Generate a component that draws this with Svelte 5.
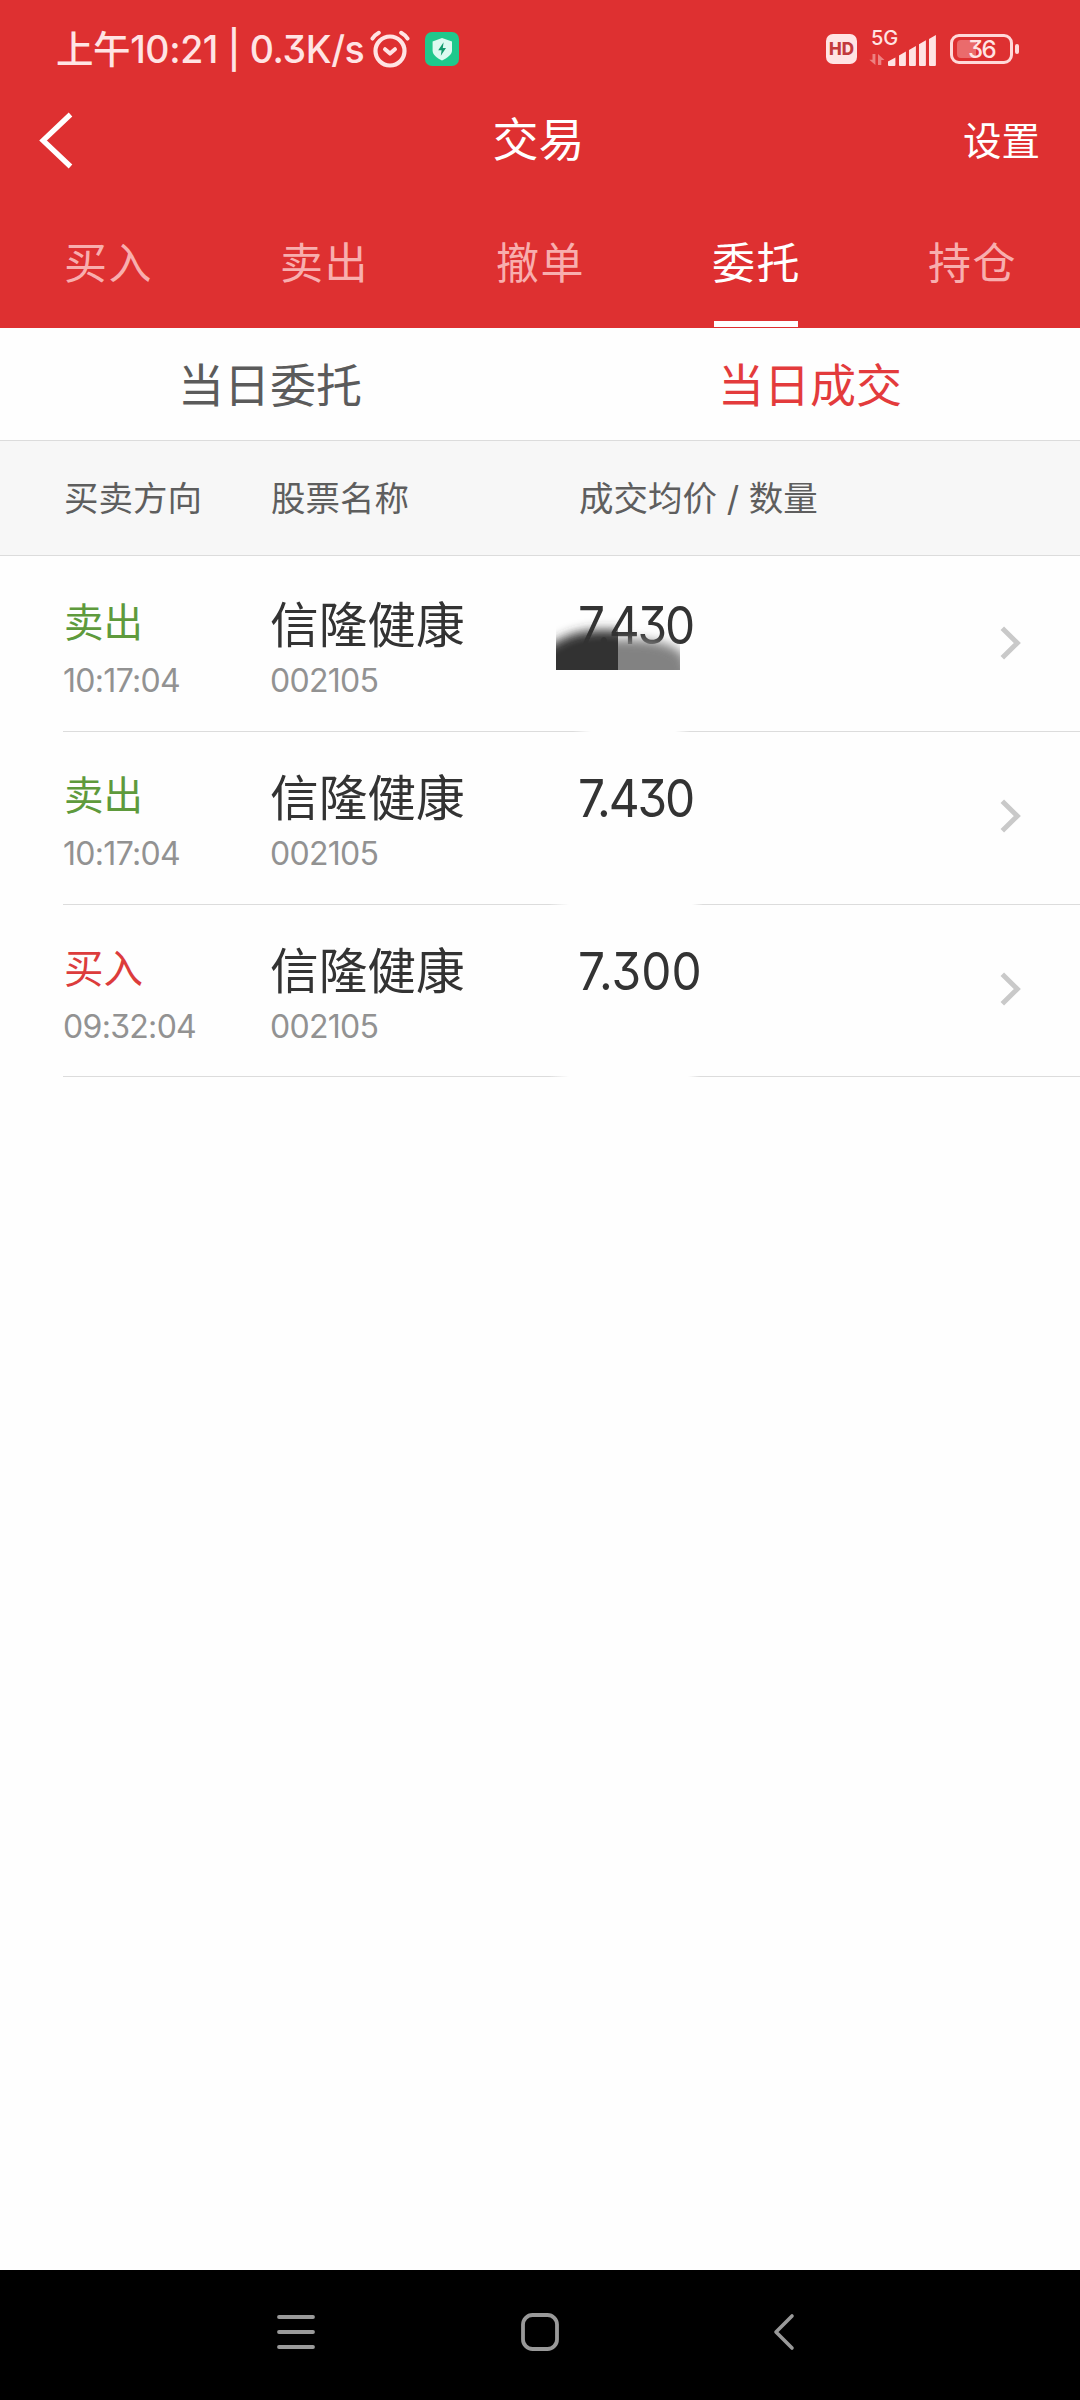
<script>
	let tabs = [
		{ label: '买入' },
		{ label: '卖出' },
		{ label: '撤单' },
		{ label: '委托', active: true },
		{ label: '持仓' }
	];

	let subTabs = [
		{ label: '当日委托' },
		{ label: '当日成交', active: true }
	];

	// gap: where the divider under the row fades out and back in
	let deals = [
		{ side: 'sell', time: '10:17:04', name: '信隆健康', code: '002105', price: '7.430', gap: [510, 528, 612, 627], smudge: true },
		{ side: 'sell', time: '10:17:04', name: '信隆健康', code: '002105', price: '7.430', gap: [486, 506, 629, 640] },
		{ side: 'buy', time: '09:32:04', name: '信隆健康', code: '002105', price: '7.300', gap: [486, 506, 625, 637] }
	];

	const sideLabel = { sell: '卖出', buy: '买入' };

	function divider(gap) {
		const [a, b, c, d] = gap;
		return `linear-gradient(to right, #dcdcdc ${a}px, transparent ${b}px, transparent ${c}px, #dcdcdc ${d}px)`;
	}
</script>

<div class="screen">
	<header class="top">
		<div class="status">
			<span class="clock">上午10:21 | 0.3K/s</span>
			<svg class="alarm" width="40" height="38" viewBox="0 0 40 38" fill="none" stroke="#ffe4e4" stroke-linecap="round" stroke-linejoin="round">
				<circle cx="20" cy="21" r="14.5" stroke-width="4.2" />
				<path d="M15 19.200l5 4.400 5-4.400" stroke-width="4" />
				<path d="M2.500 8.600Q4.500 5.200 8.800 2.800M37.500 8.600Q35.500 5.200 31.200 2.800" stroke-width="4" />
			</svg>
			<svg class="shield" width="34" height="34" viewBox="0 0 34 34">
				<rect width="34" height="34" rx="7" fill="#1fc88c" />
				<path d="M17 6l10 3.600v8.600c0 4.600-4.600 7.600-10 10.200-5.400-2.600-9.400-5.600-9.400-10.200V9.600z" fill="#dcfaf0" />
				<path d="M18.600 10.200l-5.400 8h3.400l-.8 5.600 5.200-7.800h-3.200z" fill="#12996c" />
			</svg>

			<div class="right">
				<span class="hd">HD</span>
				<div class="signal">
					<span class="net">5G</span>
					<svg width="68" height="34" viewBox="0 0 68 34" fill="#ffe4e4">
						<path d="M6.400 22v11L.3 27.800h3.200V22zM9 33V22l6.500 6h-3.200v5z" opacity=".45" />
						<path d="M19 33v-3.500l7.400-4v7.500q0 1-1 1H20q-1 0-1-1zM30 33V23.500l6.900-4v13.500q0 1-1 1H31q-1 0-1-1zM40 33V18l6.900-4v19q0 1-1 1H41q-1 0-1-1zM50 33V12.300l6.900-4V33q0 1-1 1H51q-1 0-1-1zM60 33V7l6.900-4v30q0 1-1 1H61q-1 0-1-1z" />
					</svg>
				</div>
				<div class="battery">
					<div class="level"></div>
					<span class="percent">36</span>
				</div>
				<div class="nub"></div>
			</div>
		</div>

		<div class="title-bar">
			<svg class="back" width="36" height="58" viewBox="0 0 36 58" fill="none" stroke="#fff" stroke-width="5.200">
				<path d="M33.500 2.500L6 28.500 33.500 54.500" />
			</svg>
			<h1>交易</h1>
			<span class="settings">设置</span>
		</div>

		<nav class="tabs">
			{#each tabs as tab}
				<div class="tab" class:active={tab.active}>
					<span>{tab.label}</span>
				</div>
			{/each}
		</nav>
	</header>

	<div class="sub-tabs">
		{#each subTabs as tab}
			<div class="sub-tab" class:active={tab.active}>{tab.label}</div>
		{/each}
	</div>

	<div class="columns head">
		<span>买卖方向</span>
		<span>股票名称</span>
		<span>成交均价 / 数量</span>
	</div>

	<main>
		{#each deals as deal}
			<div class="deal">
				<div class="columns body">
					<div class="cell">
						<span class="side {deal.side}">{sideLabel[deal.side]}</span>
						<span class="small">{deal.time}</span>
					</div>
					<div class="cell">
						<span class="name">{deal.name}</span>
						<span class="small">{deal.code}</span>
					</div>
					<div class="cell">
						<span class="price" class:tight={deal.price.includes('4')}>{deal.price}</span>
						{#if deal.smudge}
							<svg class="smudge" width="124" height="60" viewBox="0 0 124 60">
								<defs>
									<filter id="soft" x="-30%" y="-60%" width="160%" height="220%">
										<feGaussianBlur stdDeviation="5.500" />
									</filter>
									<clipPath id="left"><rect width="62" height="60" /></clipPath>
									<clipPath id="right"><rect x="62" width="62" height="60" /></clipPath>
								</defs>
								<g clip-path="url(#left)">
									<path d="M-20 90V48Q0 27 26 22T90 25V90z" fill="#333" filter="url(#soft)" />
								</g>
								<g clip-path="url(#right)">
									<path d="M30 90V32Q60 28 88 30T128 45L140 90z" fill="#828282" filter="url(#soft)" />
								</g>
							</svg>
						{/if}
					</div>
					<svg class="chevron" width="22" height="36" viewBox="0 0 22 36" fill="none" stroke="#c9c9c9" stroke-width="5">
						<path d="M2.300 3.300L17.300 18 2.300 32.700" />
					</svg>
				</div>
				<div class="line" style="background: {divider(deal.gap)}"></div>
			</div>
		{/each}
	</main>

	<footer>
		<svg width="38" height="38" viewBox="0 0 38 38" stroke="#999" stroke-width="3.800" stroke-linecap="round">
			<path d="M2 4h34M2 19h34M2 34h34" />
		</svg>
		<svg width="38" height="38" viewBox="0 0 38 38" fill="none" stroke="#999" stroke-width="3.800">
			<rect x="2" y="2" width="34" height="34" rx="9.500" />
		</svg>
		<svg width="38" height="38" viewBox="0 0 38 38" fill="none" stroke="#999" stroke-width="3.600" stroke-linecap="round" stroke-linejoin="round">
			<path d="M27 3L11 19l16 16" />
		</svg>
	</footer>
</div>

<style>
	:global(body) {
		margin: 0;
		background: #fefefe;
	}

	.screen {
		display: flex;
		flex-direction: column;
		width: 1080px;
		height: 2400px;
		background: #fefefe;
		font-family: Inter, 'Noto Sans CJK SC', sans-serif;
		font-feature-settings: 'cv09';
		color: #333;
		white-space: nowrap;
		overflow: hidden;
	}

	.top {
		display: flex;
		flex-direction: column;
		height: 328px;
		background: #de3031;
		color: #fff;
	}

	.status {
		display: flex;
		align-items: center;
		height: 98px;
		padding: 0 61px 0 56px;
		box-sizing: border-box;
		color: #ffe4e4;
	}

	.clock {
		width: 314px;
		padding-bottom: 5px;
		font-size: 37.500px;
		font-weight: 500;
		letter-spacing: -0.4px;
	}

	.shield {
		margin-left: 15px;
	}

	.right {
		display: flex;
		align-items: center;
		margin-left: auto;
	}

	.hd {
		width: 31px;
		height: 30px;
		border-radius: 7px;
		background: #ffe4e4;
		color: #c23a3c;
		font-size: 17px;
		font-weight: 800;
		line-height: 30px;
		text-align: center;
	}

	.signal {
		position: relative;
		margin: 0 13px 0 12px;
		height: 34px;
	}

	.net {
		position: absolute;
		left: 2px;
		top: -4px;
		font-size: 20px;
		line-height: 20px;
		font-weight: 500;
	}

	.battery {
		position: relative;
		width: 63px;
		height: 30px;
		box-sizing: border-box;
		border: 3px solid #ffd9d9;
		border-radius: 9px;
		text-align: center;
	}

	.level {
		position: absolute;
		left: 4px;
		top: 3px;
		width: 19px;
		height: 18px;
		border-radius: 4px 0 0 4px;
		background: #ea6b6c;
	}

	.percent {
		position: relative;
		display: block;
		font-size: 24px;
		line-height: 26px;
		font-weight: 500;
		letter-spacing: -1.500px;
	}

	.nub {
		width: 4px;
		height: 10px;
		margin-left: 2px;
		border-radius: 2px;
		background: #ffd9d9;
	}

	.title-bar {
		display: grid;
		grid-template-columns: 1fr auto 1fr;
		align-items: center;
		height: 86px;
		padding: 0 40px 0 37px;
	}

	h1 {
		margin: 0;
		padding-bottom: 3px;
		font-size: 46px;
		line-height: 83px;
		font-weight: 400;
	}

	.settings {
		justify-self: end;
		padding-bottom: 7px;
		font-size: 38.500px;
	}

	.tabs {
		display: flex;
		flex: 1;
	}

	.tab {
		display: flex;
		flex: 1;
		justify-content: center;
		color: #f8aeae;
		font-size: 43px;
		line-height: 159px;
		letter-spacing: 1.500px;
		text-indent: -2px;
	}

	.tab span {
		box-sizing: border-box;
		width: 84px;
		height: 143px;
	}

	.tab.active {
		color: #fff;
	}

	.tab.active span {
		border-bottom: 6px solid #fff;
	}

	.sub-tabs {
		display: flex;
		height: 112px;
		border-bottom: 1px solid #dcdcdc;
	}

	.sub-tab {
		flex: 1;
		color: #5b5b5b;
		font-size: 46px;
		line-height: 114px;
		text-align: center;
	}

	.sub-tab.active {
		color: #e33b3c;
	}

	.columns {
		display: grid;
		grid-template-columns: 207px 308px 1fr auto;
	}

	.head {
		height: 114px;
		padding-left: 64px;
		border-bottom: 1px solid #dcdcdc;
		background: #f7f7f7;
		color: #5e5e5e;
		font-size: 34.500px;
		line-height: 116px;
	}

	main {
		padding-top: 3px;
	}

	.deal {
		height: 173px;
		padding-left: 63px;
	}

	.body {
		height: 172px;
		padding-right: 58px;
	}

	.deal:last-child .body {
		height: 171px;
	}

	.line {
		height: 1px;
	}

	.cell {
		position: relative;
		display: flex;
		flex-direction: column;
		padding-top: 31px;
	}

	.side,
	.name,
	.price {
		height: 71px;
		line-height: 71px;
	}

	.side {
		padding-left: 1px;
		font-size: 39.500px;
		line-height: 67px;
	}

	.sell {
		color: #5e9a3c;
	}

	.buy {
		color: #dc3c3c;
	}

	.name {
		font-size: 48.700px;
	}

	/* slightly condensed digits */
	.price {
		font-size: 52px;
		transform: scaleX(0.92);
		transform-origin: left;
	}

	.price.tight {
		letter-spacing: -2.300px;
	}

	.small {
		color: #929292;
		font-size: 32px;
		line-height: 40px;
		letter-spacing: -0.700px;
	}

	.smudge {
		position: absolute;
		left: -22px;
		top: 51px;
	}

	.chevron {
		margin-top: 66px;
	}

	footer {
		display: flex;
		justify-content: center;
		align-items: center;
		gap: 206px;
		height: 130px;
		margin-top: auto;
		padding-bottom: 6px;
		box-sizing: border-box;
		background: #000;
	}
</style>
